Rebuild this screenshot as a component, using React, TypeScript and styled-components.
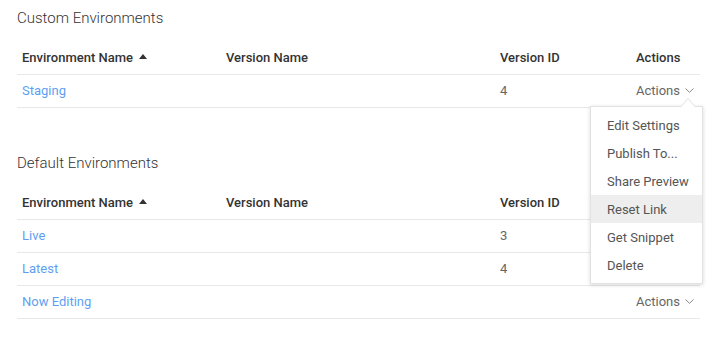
import React from 'react'
import styled, { createGlobalStyle } from 'styled-components'

const GlobalStyle = createGlobalStyle`
  body {
    margin: 0;
    background: #fff;
    font-family: Roboto, 'Liberation Sans', Arial, sans-serif;
  }
`

const Page = styled.div`
  width: 683px;
  padding: 7px 0 0 17px;
`

const Section = styled.section`
  & + & {
    margin-top: 44px;
  }
`

const Title = styled.h2`
  margin: 0 0 13px;
  font-size: 15px;
  line-height: 22px;
  font-weight: 300;
  color: #333;
`

const Row = styled.div<{ $head?: boolean }>`
  display: grid;
  grid-template-columns: 204px 274px 136px 1fr;
  height: 32px;
  border-bottom: 1px solid #e8e8e8;
  font-size: 13px;
  font-weight: ${p => (p.$head ? 500 : 400)};
  color: ${p => (p.$head ? '#333' : '#666')};
`

const Cell = styled.div`
  position: relative;
  display: flex;
  align-items: center;
  padding: 0 5px 2px;
  white-space: nowrap;
`

const Link = styled.a`
  color: #5e9ff2;
  text-decoration: none;
  cursor: pointer;
`

const SortArrow = styled.span`
  display: inline-block;
  margin-left: 6px;
  width: 0;
  height: 0;
  border-left: 4px solid transparent;
  border-right: 4px solid transparent;
  border-bottom: 5px solid #333;
  transform: translateY(-1px);
`

const Trigger = styled.span`
  display: inline-flex;
  align-items: center;
  gap: 5px;
  color: #666;
  cursor: pointer;
`

const Menu = styled.ul`
  position: absolute;
  top: 31px;
  right: -3px;
  z-index: 10;
  width: 113px;
  margin: 0;
  padding: 4px 0;
  list-style: none;
  background: #fff;
  border: 1px solid #e2e2e2;
  box-sizing: border-box;
  box-shadow: 0 1px 4px rgba(0, 0, 0, 0.15);

  &::before,
  &::after {
    content: '';
    position: absolute;
    right: 7px;
    width: 0;
    height: 0;
    border-left: 7px solid transparent;
    border-right: 7px solid transparent;
  }
  &::before {
    top: -9px;
    border-bottom: 8px solid #dcdcdc;
  }
  &::after {
    top: -8px;
    border-bottom: 8px solid #fff;
  }
`

const MenuItem = styled.li<{ $active?: boolean }>`
  height: 28px;
  display: flex;
  align-items: center;
  padding: 0 16px;
  font-size: 13px;
  font-weight: 400;
  color: #555;
  background: ${p => (p.$active ? '#eeeeee' : 'transparent')};
  cursor: pointer;
`

const Chevron = () => (
  <svg width="9" height="5" viewBox="0 0 9 5" fill="none">
    <path d="M0.5 0.5 L4.5 4.3 L8.5 0.5" stroke="#888" strokeWidth="1" />
  </svg>
)

interface Env {
  name: string
  versionName: string
  versionId: string
}

const menuItems = ['Edit Settings', 'Publish To...', 'Share Preview', 'Reset Link', 'Get Snippet', 'Delete']

const EnvTable = ({ title, rows, openIndex }: { title: string; rows: Env[]; openIndex?: number }) => (
  <Section>
    <Title>{title}</Title>
    <Row $head>
      <Cell>
        Environment Name
        <SortArrow />
      </Cell>
      <Cell>Version Name</Cell>
      <Cell>Version ID</Cell>
      <Cell>Actions</Cell>
    </Row>
    {rows.map((r, i) => (
      <Row key={r.name}>
        <Cell>
          <Link>{r.name}</Link>
        </Cell>
        <Cell>{r.versionName}</Cell>
        <Cell>{r.versionId}</Cell>
        <Cell>
          <Trigger>
            Actions <Chevron />
          </Trigger>
          {openIndex === i && (
            <Menu>
              {menuItems.map(m => (
                <MenuItem key={m} $active={m === 'Reset Link'}>
                  {m}
                </MenuItem>
              ))}
            </Menu>
          )}
        </Cell>
      </Row>
    ))}
  </Section>
)

export default function App() {
  return (
    <>
      <GlobalStyle />
      <Page>
        <EnvTable title="Custom Environments" rows={[{ name: 'Staging', versionName: '', versionId: '4' }]} openIndex={0} />
        <EnvTable
          title="Default Environments"
          rows={[
            { name: 'Live', versionName: '', versionId: '3' },
            { name: 'Latest', versionName: '', versionId: '4' },
            { name: 'Now Editing', versionName: '', versionId: '' },
          ]}
        />
      </Page>
    </>
  )
}
